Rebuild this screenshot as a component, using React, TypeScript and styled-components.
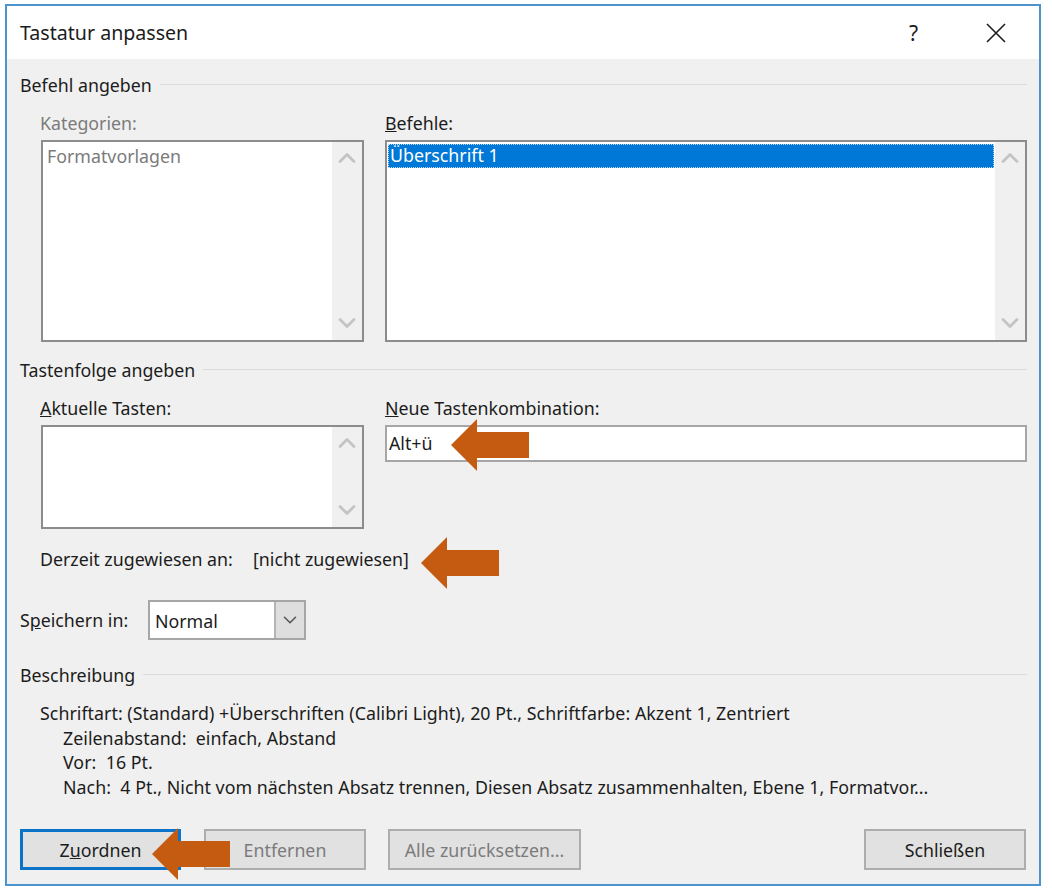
import styled, { createGlobalStyle } from "styled-components";
import { ChevronDown, ChevronUp } from "lucide-react";

const GlobalStyle = createGlobalStyle`
  html, body {
    margin: 0;
    padding: 0;
    background: #fff;
  }
  body {
    font-family: "Noto Sans", "Liberation Sans", sans-serif;
    font-size: 17.8px;
    color: #1c1c1c;
  }
`;

const Window = styled.div`
  position: relative;
  box-sizing: border-box;
  width: 1036px;
  height: 882px;
  margin: 4px 0 0 5px;
  border: 2px solid #4b94cd;
  background: #f0f0f0;
`;

const TitleBar = styled.header`
  display: flex;
  align-items: center;
  height: 53px;
  padding: 0 33px 0 13px;
  background: #fff;
  font-size: 19.6px;
`;

const Title = styled.div`
  flex: 1;
`;

const Help = styled.div`
  margin-right: 68px;
  font-size: 21px;
`;

const Body = styled.div`
  padding: 15px 12px 0 13px;
`;

const SectionHead = styled.div<{ $top?: number }>`
  box-sizing: border-box;
  display: flex;
  align-items: center;
  gap: 8px;
  height: 24px;
  padding-bottom: 2px;
  margin-top: ${(p) => p.$top || 0}px;
  &::after {
    content: "";
    flex: 1;
    height: 1px;
    margin-top: -2px;
    background: #dcdcdc;
  }
`;

const Columns = styled.div`
  display: grid;
  grid-template-columns: 323px 642px;
  column-gap: 21px;
  margin: 13px 0 0 21px;
`;

const Label = styled.div<{ $disabled?: boolean; $inset?: number }>`
  height: 24px;
  margin: 0 0 5px ${(p) => p.$inset || 0}px;
  line-height: 24px;
  color: ${(p) => (p.$disabled ? "#7b7b7b" : "#1c1c1c")};
`;

const ListBox = styled.div<{ $height: number; $disabled?: boolean }>`
  box-sizing: border-box;
  display: flex;
  height: ${(p) => p.$height}px;
  border: 2px solid #8c8c8c;
  background: #fff;
  color: ${(p) => (p.$disabled ? "#7b7b7b" : "#1c1c1c")};
`;

const ListItems = styled.div`
  flex: 1;
  min-width: 0;
  padding: 2px 1px 0 1px;
`;

const PlainItem = styled.div`
  height: 24px;
  padding-left: 3px;
  line-height: 24px;
`;

const SelectedItem = styled.div`
  box-sizing: border-box;
  height: 24px;
  padding-left: 1px;
  border: 1px dotted #b9d6ee;
  background: #0078d7;
  color: #fff;
  line-height: 21px;
`;

const ScrollTrack = styled.div`
  display: flex;
  flex-direction: column;
  justify-content: space-between;
  align-items: center;
  width: 30px;
  padding: 2px 0 3px;
  background: #f0f0f0;
  color: #c4c4c4;
`;

const TextInput = styled.div`
  box-sizing: border-box;
  height: 37px;
  padding-left: 2px;
  border: 2px solid #a6a6a6;
  background: #fff;
  line-height: 33px;
`;

const AssignedRow = styled.div`
  display: flex;
  height: 24px;
  margin: 18px 0 0 20px;
  line-height: 24px;
`;

const AssignedLabel = styled.div`
  width: 213px;
`;

const SaveRow = styled.div`
  display: flex;
  align-items: center;
  margin-top: 29px;
`;

const SaveLabel = styled.div`
  width: 128px;
`;

const Combo = styled.div`
  box-sizing: border-box;
  display: flex;
  width: 158px;
  height: 40px;
  border: 2px solid #a6a6a6;
  background: #fff;
  line-height: 38px;
`;

const ComboValue = styled.div`
  flex: 1;
  padding-left: 5px;
`;

const ComboButton = styled.div`
  display: flex;
  align-items: center;
  justify-content: center;
  width: 28px;
  border-left: 2px solid #b4b4b4;
  background: #dedede;
  color: #555;
`;

const Description = styled.div`
  margin: 13px 0 0 20px;
  line-height: 24.6px;
  letter-spacing: 0.04px;
  white-space: nowrap;
`;

const DescLine = styled.div<{ $indent?: boolean }>`
  padding-left: ${(p) => (p.$indent ? 23 : 0)}px;
  white-space: pre;
`;

const ButtonRow = styled.div`
  display: flex;
  margin-top: 30px;
`;

const Button = styled.div<{ $width: number; $gap?: number; $primary?: boolean; $disabled?: boolean }>`
  box-sizing: border-box;
  display: flex;
  align-items: center;
  justify-content: center;
  width: ${(p) => p.$width}px;
  height: 41px;
  margin-left: ${(p) => p.$gap || 0}px;
  border: ${(p) => (p.$primary ? "3px solid #0b74c8" : "2px solid #adadad")};
  background: #e1e1e1;
  color: ${(p) => (p.$disabled ? "#7b7b7b" : "#1c1c1c")};
`;

const Arrow = styled.svg<{ $x: number; $y: number }>`
  position: absolute;
  left: ${(p) => p.$x}px;
  top: ${(p) => p.$y}px;
`;

function Callout({ x, y }: { x: number; y: number }) {
  return (
    <Arrow $x={x} $y={y} width="78" height="52" viewBox="0 0 78 52">
      <polygon points="0,26 26,0 26,13 78,13 78,39 26,39 26,52" fill="#c55a11" />
    </Arrow>
  );
}

function Scroll() {
  return (
    <ScrollTrack>
      <ChevronUp size={28} strokeWidth={2.4} />
      <ChevronDown size={28} strokeWidth={2.4} />
    </ScrollTrack>
  );
}

export default function App() {
  return (
    <>
      <GlobalStyle />
      <Window>
        <TitleBar>
          <Title>Tastatur anpassen</Title>
          <Help>?</Help>
          <svg width="20" height="20" viewBox="0 0 20 20">
            <path d="M1 1 L19 19 M19 1 L1 19" stroke="#1c1c1c" strokeWidth="1.6" fill="none" />
          </svg>
        </TitleBar>
        <Body>
          <SectionHead>Befehl angeben</SectionHead>
          <Columns>
            <div>
              <Label $disabled $inset={-1}>Kategorien:</Label>
              <ListBox $height={202} $disabled>
                <ListItems>
                  <PlainItem>Formatvorlagen</PlainItem>
                </ListItems>
                <Scroll />
              </ListBox>
            </div>
            <div>
              <Label>
                <u>B</u>efehle:
              </Label>
              <ListBox $height={202}>
                <ListItems>
                  <SelectedItem>Überschrift 1</SelectedItem>
                </ListItems>
                <Scroll />
              </ListBox>
            </div>
          </Columns>

          <SectionHead $top={17}>Tastenfolge angeben</SectionHead>
          <Columns>
            <div>
              <Label $inset={-1}>
                <u>A</u>ktuelle Tasten:
              </Label>
              <ListBox $height={104}>
                <ListItems />
                <Scroll />
              </ListBox>
            </div>
            <div>
              <Label>
                <u>N</u>eue Tastenkombination:
              </Label>
              <TextInput>Alt+ü</TextInput>
            </div>
          </Columns>

          <AssignedRow>
            <AssignedLabel>Derzeit zugewiesen an:</AssignedLabel>
            <div>[nicht zugewiesen]</div>
          </AssignedRow>

          <SaveRow>
            <SaveLabel>
              S<u>p</u>eichern in:
            </SaveLabel>
            <Combo>
              <ComboValue>Normal</ComboValue>
              <ComboButton>
                <ChevronDown size={22} strokeWidth={1.7} />
              </ComboButton>
            </Combo>
          </SaveRow>

          <SectionHead $top={24}>Beschreibung</SectionHead>
          <Description>
            <DescLine>Schriftart: (Standard) +Überschriften (Calibri Light), 20 Pt., Schriftfarbe: Akzent 1, Zentriert</DescLine>
            <DescLine $indent>Zeilenabstand:  einfach, Abstand</DescLine>
            <DescLine $indent>Vor:  16 Pt.</DescLine>
            <DescLine $indent>Nach:  4 Pt., Nicht vom nächsten Absatz trennen, Diesen Absatz zusammenhalten, Ebene 1, Formatvor...</DescLine>
          </Description>

          <ButtonRow>
            <Button $width={161} $primary>
              Z<u>u</u>ordnen
            </Button>
            <Button $width={162} $gap={23} $disabled>
              Entfernen
            </Button>
            <Button $width={193} $gap={22} $disabled>
              Alle zurücksetzen...
            </Button>
            <Button $width={162} $gap={283}>
              Schließen
            </Button>
          </ButtonRow>
        </Body>
        <Callout x={444} y={413} />
        <Callout x={414} y={531} />
        <Callout x={145} y={822} />
      </Window>
    </>
  );
}
